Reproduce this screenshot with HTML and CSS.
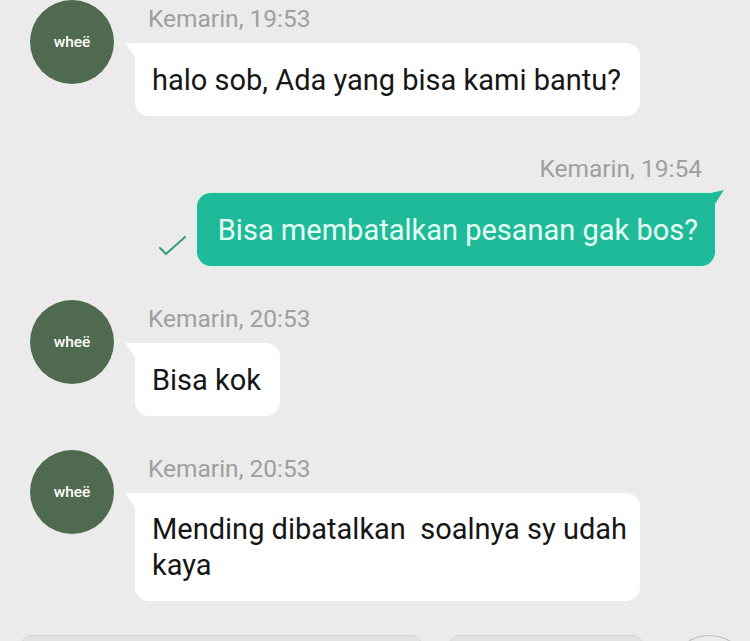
FILE: index.html
```html
<!DOCTYPE html>
<html lang="id">
<head>
    <meta charset="UTF-8">
    <meta name="viewport" content="width=device-width, initial-scale=1.0">
    <title>Chat</title>
    <link rel="stylesheet" href="styles.css">
</head>
<body>
    <div class="chat">

        <div class="msg in">
            <div class="avatar">wheë</div>
            <div class="body">
                <div class="time">Kemarin, 19:53</div>
                <div class="bubble">halo sob, Ada yang bisa kami bantu?</div>
            </div>
        </div>

        <div class="msg out">
            <div class="body">
                <div class="time">Kemarin, 19:54</div>
                <div class="line">
                    <svg class="check" width="30" height="22" viewBox="0 0 30 22">
                        <path d="M3 13 L9 19 L28 2" fill="none" stroke="#3a9e86" stroke-width="2.2" stroke-linecap="round" stroke-linejoin="round"/>
                    </svg>
                    <div class="bubble">Bisa membatalkan pesanan gak bos?</div>
                </div>
            </div>
        </div>

        <div class="msg in">
            <div class="avatar">wheë</div>
            <div class="body">
                <div class="time">Kemarin, 20:53</div>
                <div class="bubble">Bisa kok</div>
            </div>
        </div>

        <div class="msg in">
            <div class="avatar">wheë</div>
            <div class="body">
                <div class="time">Kemarin, 20:53</div>
                <div class="bubble wide">Mending dibatalkan&nbsp; soalnya sy udah<br>kaya</div>
            </div>
        </div>

        <div class="composer">
            <div class="field long"></div>
            <div class="field short"></div>
            <div class="round"></div>
        </div>

    </div>
</body>
</html>
```

FILE: styles.css
```css
body {
    margin: 0;
    background: #ebebeb;
    font-family: Roboto, "Noto Sans", sans-serif;
}

.chat {
    display: flex;
    flex-direction: column;
    gap: 34px;
    height: 641px;
    overflow: hidden;
}

.msg {
    display: flex;
    align-items: flex-start;
    flex-shrink: 0;
}

.msg.in {
    padding-left: 30px;
}

.msg.out {
    justify-content: flex-end;
    padding-right: 35px;
}

.avatar {
    width: 84px;
    height: 84px;
    border-radius: 50%;
    background: #4f6a4e;
    color: #fff;
    font-size: 15.5px;
    font-weight: 500;
    display: flex;
    align-items: center;
    justify-content: center;
    flex-shrink: 0;
}

.msg.in .body {
    margin-left: 21px;
}

.time {
    height: 43px;
    line-height: 38px;
    font-size: 24.5px;
    color: #9f9f9f;
    padding-left: 13px;
}

.msg.out .time {
    text-align: right;
    padding-left: 0;
    padding-right: 13px;
}

.bubble {
    position: relative;
    background: #fff;
    color: #161616;
    font-size: 29px;
    line-height: 36px;
    padding: 18.5px 19px 18.5px 17px;
    border-radius: 4px 14px 14px 14px;
    width: fit-content;
    white-space: nowrap;
}

.bubble.wide {
    padding: 18px 13px 18px 17px;
}

.msg.in .bubble::before {
    content: "";
    position: absolute;
    left: -10px;
    top: 0;
    width: 14px;
    height: 20px;
    background: #fff;
    clip-path: polygon(0 0, 100% 0, 100% 100%);
}

.line {
    display: flex;
    align-items: flex-end;
    gap: 10px;
}

.check {
    margin-bottom: 9px;
}

.msg.out .bubble {
    background: #1fba99;
    color: #e6fff5;
    padding-left: 21px;
    padding-right: 17px;
    border-radius: 14px 4px 14px 14px;
    box-shadow: 0 0 0 1px rgba(190, 250, 230, 0.6);
}

.msg.out .bubble::after {
    content: "";
    position: absolute;
    right: -9px;
    top: -3px;
    width: 13px;
    height: 20px;
    background: #1fba99;
    clip-path: polygon(0 3px, 100% 0, 0 100%);
}

.composer {
    display: flex;
    gap: 25px;
    padding-left: 20px;
    flex-shrink: 0;
}

.field {
    height: 40px;
    background: #e2e2e2;
    border: 1px solid #d2d2d2;
    border-radius: 12px;
}

.field.long {
    width: 408px;
}

.field.short {
    width: 198px;
}

.round {
    width: 80px;
    height: 80px;
    border-radius: 50%;
    border: 1px solid #bdbdbd;
}
```
